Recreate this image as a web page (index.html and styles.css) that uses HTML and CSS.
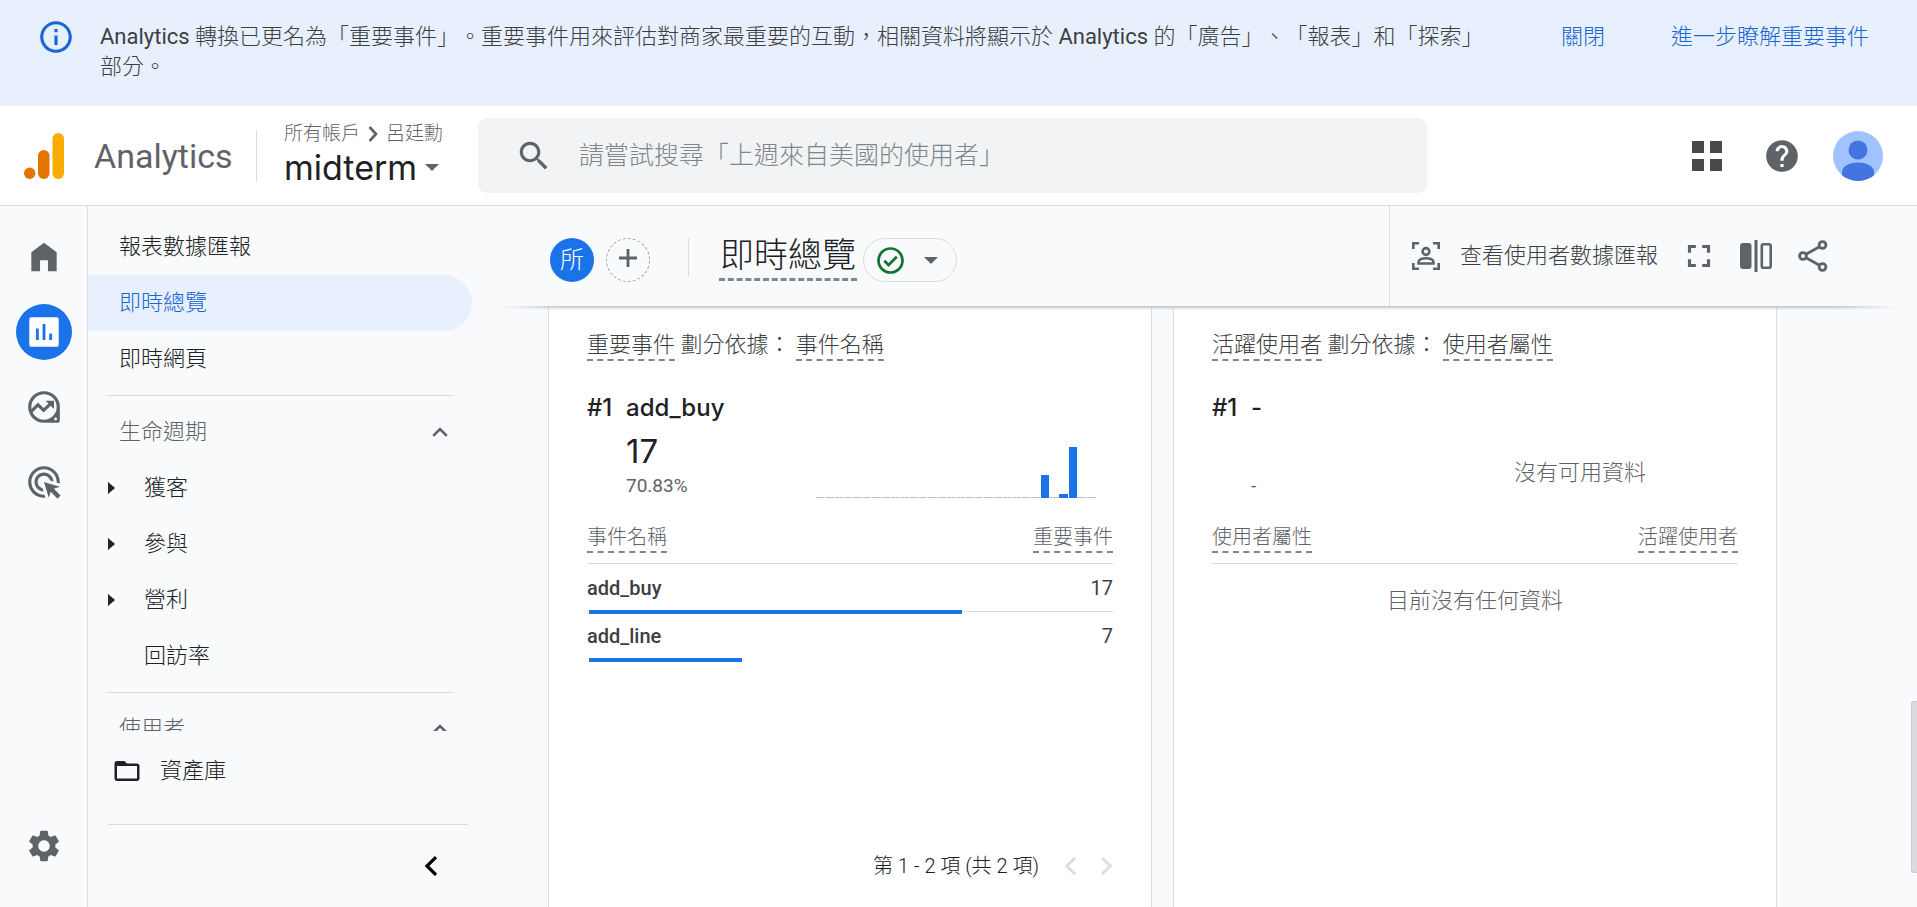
FILE: index.html
```html
<!DOCTYPE html>
<html lang="zh-Hant">
<head>
<meta charset="utf-8">
<title>Analytics | 即時總覽</title>
<link rel="stylesheet" href="styles.css">
</head>
<body>
<div class="app">
  <div class="notice">
    <svg class="icon notice-icon" viewBox="0 0 24 24"><path d="M11 7h2v2h-2zm0 4h2v6h-2zm1-9C6.48 2 2 6.48 2 12s4.48 10 10 10 10-4.48 10-10S17.52 2 12 2zm0 18c-4.41 0-8-3.59-8-8s3.59-8 8-8 8 3.59 8 8-3.59 8-8 8z"/></svg>
    <p class="notice-text"><span class="latin">Analytics</span> 轉換已更名為「重要事件」。重要事件用來評估對商家最重要的互動，相關資料將顯示於 <span class="latin">Analytics</span> 的「廣告」、「報表」和「探索」部分。</p>
    <button class="notice-action" type="button">關閉</button>
    <a class="notice-action" href="#">進一步瞭解重要事件</a>
  </div>

  <header class="topbar">
    <a class="brand" href="#">
      <svg class="brand-logo" viewBox="0 0 40 46"><rect x="28.5" y="0" width="11.5" height="46" rx="5.7" fill="#f9ab00"/><rect x="14" y="17" width="11.5" height="29" rx="5.7" fill="#e37400"/><circle cx="5.7" cy="40.3" r="5.7" fill="#e37400"/></svg>
      <span class="brand-name">Analytics</span>
    </a>
    <div class="property">
      <div class="crumbs"><span>所有帳戶</span><svg class="crumb-arrow" viewBox="0 0 10 16"><path d="M1.5 1l6.5 7-6.5 7" fill="none" stroke="#5f6368" stroke-width="2.6"/></svg><span>呂廷勳</span></div>
      <button class="property-name" type="button">midterm<svg class="caret" viewBox="0 0 14 7"><path d="M0 0h14L7 7z"/></svg></button>
    </div>
    <label class="search">
      <svg class="icon search-icon" viewBox="0 0 24 24"><path d="M15.5 14h-.79l-.28-.27C15.41 12.59 16 11.11 16 9.5 16 5.91 13.09 3 9.5 3S3 5.91 3 9.5 5.91 16 9.5 16c1.61 0 3.09-.59 4.23-1.57l.27.28v.79l5 4.99L20.49 19l-4.99-5zm-6 0C7.01 14 5 11.99 5 9.5S7.01 5 9.5 5 14 7.01 14 9.5 11.99 14 9.5 14z"/></svg>
      <input class="search-input" type="text" aria-label="搜尋" placeholder="請嘗試搜尋「上週來自美國的使用者」">
    </label>
    <div class="tools">
      <button class="tool" type="button" aria-label="應用程式"><svg class="apps-icon" viewBox="0 0 30 30"><path d="M0 0h12v12H0zM18 0h12v12H18zM0 18h12v12H0zM18 18h12v12H18z"/></svg></button>
      <button class="tool" type="button" aria-label="說明"><svg class="icon" viewBox="0 0 24 24"><path d="M12 2C6.48 2 2 6.48 2 12s4.48 10 10 10 10-4.48 10-10S17.52 2 12 2zm1 17h-2v-2h2v2zm2.07-7.75l-.9.92C13.45 12.9 13 13.5 13 15h-2v-.5c0-1.1.45-2.1 1.17-2.83l1.24-1.26c.37-.36.59-.86.59-1.41 0-1.1-.9-2-2-2s-2 .9-2 2H8c0-2.21 1.79-4 4-4s4 1.79 4 4c0 .88-.36 1.68-.93 2.25z"/></svg></button>
      <button class="tool" type="button" aria-label="帳戶"><svg class="avatar" viewBox="0 0 50 50"><defs><clipPath id="face"><circle cx="25" cy="25" r="25"/></clipPath></defs><g clip-path="url(#face)"><rect width="50" height="50" fill="#a0c3ff"/><circle cx="25" cy="19" r="9.5" fill="#4374e0"/><path d="M9 50V41c0-5 6-9.500 16-9.500S41 36 41 41v9z" fill="#4374e0"/></g></svg></button>
    </div>
  </header>

  <div class="body">
    <nav class="rail" aria-label="主選單">
      <a class="rail-item" href="#" aria-label="首頁"><svg class="icon" viewBox="0 0 24 24"><path d="M4 21V9l8-6 8 6v12h-5.500v-7h-5v7z"/></svg></a>
      <a class="rail-item" href="#" aria-label="報表"><span class="rail-disc"><svg class="icon" viewBox="0 0 24 24"><path d="M20 2.700H4c-.8 0-1.300.5-1.300 1.300v16c0 .8.5 1.300 1.300 1.300h16c.8 0 1.300-.5 1.300-1.300V4c0-.8-.5-1.300-1.300-1.300zM8.700 17H6.900V9.800h1.800V17zm4.200 0h-1.800V7h1.800v10zm4.200 0h-1.800v-4h1.800v4z"/></svg></span></a>
      <a class="rail-item" href="#" aria-label="探索"><svg class="icon" viewBox="0 0 24 24"><path fill-rule="evenodd" d="M12 2a10 10 0 0 0 0 20h8.500c.8 0 1.500-.7 1.500-1.500V12A10 10 0 0 0 12 2zm0 2a8 8 0 1 1 0 16 8 8 0 0 1 0-16zm7.300 14.700a.9.9 0 1 1 0 1.800.9.9 0 0 1 0-1.800z"/><path d="M3.500 15.200l4.700-4.600 3.600 3.500L16.500 9.500" fill="none" stroke="currentColor" stroke-width="2"/><path d="M13 8h5.300v5.300z"/></svg></a>
      <a class="rail-item" href="#" aria-label="廣告"><svg class="icon" viewBox="0 0 24 24"><path d="M11.710 17.990C8.530 17.840 6 15.220 6 12c0-3.310 2.690-6 6-6 3.220 0 5.840 2.530 5.990 5.710l-2.100-.63C15.480 9.310 13.890 8 12 8c-2.210 0-4 1.790-4 4 0 1.890 1.310 3.480 3.080 3.890l.63 2.100zM22 12c0 .3-.01.6-.04.9l-1.970-.59c.01-.1.01-.21.01-.31 0-4.420-3.580-8-8-8s-8 3.580-8 8 3.580 8 8 8c.1 0 .21 0 .31-.01l.59 1.970c-.3.03-.6.04-.9.04-5.520 0-10-4.480-10-10S6.480 2 12 2s10 4.480 10 10zm-3.770 4.260L22 15l-10-3 3 10 1.260-3.770 4.270 4.270 1.980-1.980-4.280-4.260z"/></svg></a>
      <a class="rail-item rail-last" href="#" aria-label="管理"><svg class="icon" viewBox="0 0 24 24"><path d="M19.140 12.940c.04-.3.06-.61.06-.94 0-.32-.02-.64-.07-.94l2.030-1.580c.18-.14.23-.41.12-.61l-1.920-3.320c-.12-.22-.37-.29-.59-.22l-2.390.96c-.5-.38-1.030-.7-1.620-.94l-.36-2.540c-.04-.24-.24-.41-.48-.41h-3.840c-.24 0-.43.17-.47.41l-.36 2.540c-.59.24-1.130.57-1.620.94l-2.390-.96c-.22-.08-.47 0-.59.22L2.740 8.870c-.12.21-.08.47.12.61l2.030 1.580c-.05.3-.09.63-.09.94s.02.64.07.94l-2.030 1.580c-.18.14-.23.41-.12.61l1.920 3.320c.12.22.37.29.59.22l2.390-.96c.5.38 1.030.7 1.620.94l.36 2.540c.05.24.24.41.48.41h3.840c.24 0 .44-.17.47-.41l.36-2.540c.59-.24 1.130-.56 1.620-.94l2.390.96c.22.08.47 0 .59-.22l1.920-3.320c.12-.22.07-.47-.12-.61l-2.010-1.580zM12 15.600c-1.980 0-3.600-1.620-3.600-3.600s1.620-3.600 3.600-3.600 3.600 1.620 3.600 3.600-1.620 3.600-3.600 3.600z"/></svg></a>
    </nav>

    <nav class="sidenav" aria-label="報表">
      <div class="nav-scroll">
        <a class="nav-item" href="#">報表數據匯報</a>
        <a class="nav-item nav-active" href="#">即時總覽</a>
        <a class="nav-item" href="#">即時網頁</a>
        <hr class="nav-rule">
        <button class="nav-item nav-group" type="button">生命週期<svg class="nav-chevron" viewBox="0 0 16 10"><path d="M1.200 8.800L8 2l6.800 6.800" fill="none" stroke="currentColor" stroke-width="2.600"/></svg></button>
        <a class="nav-item nav-child" href="#"><svg class="nav-tri" viewBox="0 0 7 12"><path d="M0 0l7 6-7 6z"/></svg>獲客</a>
        <a class="nav-item nav-child" href="#"><svg class="nav-tri" viewBox="0 0 7 12"><path d="M0 0l7 6-7 6z"/></svg>參與</a>
        <a class="nav-item nav-child" href="#"><svg class="nav-tri" viewBox="0 0 7 12"><path d="M0 0l7 6-7 6z"/></svg>營利</a>
        <a class="nav-item nav-child" href="#"><span class="nav-tri"></span>回訪率</a>
        <hr class="nav-rule">
        <button class="nav-item nav-group" type="button">使用者<svg class="nav-chevron" viewBox="0 0 16 10"><path d="M1.200 8.800L8 2l6.800 6.800" fill="none" stroke="currentColor" stroke-width="2.600"/></svg></button>
      </div>
      <div class="nav-foot">
        <a class="nav-item nav-library" href="#"><svg class="folder" viewBox="0 0 24 24"><path fill-rule="evenodd" d="M10 4H4c-1.100 0-2 .9-2 2v12c0 1.100.9 2 2 2h16c1.100 0 2-.9 2-2V8c0-1.100-.9-2-2-2h-8l-2-2zM4 8h16v10H4z"/></svg>資產庫</a>
        <div class="nav-collapse"><button class="collapse-button" type="button" aria-label="收合"><svg class="collapse-icon" viewBox="0 0 14 20"><path d="M12 1.200L3 10l9 8.800" fill="none" stroke="#000" stroke-width="3.200"/></svg></button></div>
      </div>
    </nav>

    <main class="main">
      <div class="report-bar">
        <div class="report-left">
          <button class="segment" type="button">所</button>
          <button class="add-segment" type="button" aria-label="新增比較項目"><svg class="plus" viewBox="0 0 18 18"><path d="M9 0v18M0 9h18" stroke="#5f6368" stroke-width="2.800"/></svg></button>
          <span class="bar-rule"></span>
          <h1 class="report-title">即時總覽</h1>
          <button class="status" type="button" aria-label="資料品質"><svg class="status-icon" viewBox="0 0 27 27"><circle cx="13.500" cy="13.500" r="12" fill="none" stroke="#137333" stroke-width="2.700"/><path d="M7.300 13.800l4.200 4.200 8.300-8.300" fill="none" stroke="#137333" stroke-width="2.700"/></svg><svg class="caret" viewBox="0 0 14 7"><path d="M0 0h14L7 7z"/></svg></button>
        </div>
        <div class="report-right">
          <button class="snapshot" type="button"><svg class="glyph" viewBox="0 0 32 32"><g fill="none" stroke="currentColor" stroke-width="2.600"><path d="M3.300 9V3.300H9M23 3.300h5.700V9M28.700 23v5.700H23M9 28.700H3.300V23"/><circle cx="16" cy="11.500" r="3.400"/><path d="M8.500 23.500v-1.300c0-2.500 3.500-4 7.500-4s7.500 1.500 7.500 4v1.300z"/></g></svg>查看使用者數據匯報</button>
          <button class="tool" type="button" aria-label="全螢幕"><svg class="icon" viewBox="0 0 24 24"><path d="M7 14H5v5h5v-2H7v-3zm-2-4h2V7h3V5H5v5zm12 7h-3v2h5v-5h-2v3zM14 5v2h3v3h2V5h-5z"/></svg></button>
          <button class="tool" type="button" aria-label="比較"><svg class="glyph" viewBox="0 0 32 32"><rect x="0" y="3" width="11.500" height="26" rx="3"/><rect x="14.500" y="0" width="3" height="32"/><rect x="21.800" y="4.300" width="8.900" height="23.400" rx="1.800" fill="none" stroke="currentColor" stroke-width="2.600"/></svg></button>
          <button class="tool tool-share" type="button" aria-label="分享"><svg class="glyph" viewBox="0 0 32 32"><g fill="none" stroke="currentColor" stroke-width="2.800"><circle cx="25.500" cy="5" r="3.400"/><circle cx="6" cy="16" r="3.400"/><circle cx="25.500" cy="27" r="3.400"/><path d="M9 14.200l13.500-7.500M9 17.800l13.500 7.500"/></g></svg></button>
        </div>
      </div>

      <div class="cards">
        <section class="card">
          <h2 class="card-title"><span class="term">重要事件</span> 劃分依據： <span class="term">事件名稱</span></h2>
          <div class="lead"><span class="rank">#1</span><span>add_buy</span></div>
          <div class="summary">
            <div class="figures"><div class="figure">17</div><div class="percent">70.83%</div></div>
            <div class="spark">
              <i></i><i></i><i></i><i></i><i></i><i></i><i></i><i></i><i></i><i></i><i></i><i></i><i></i><i></i><i></i><i></i><i></i><i></i><i></i><i></i><i></i><i></i><i></i><i></i><i class="on" style="height:45%"></i><i></i><i class="on" style="height:8%"></i><i class="on" style="height:100%"></i><i></i><i></i>
            </div>
          </div>
          <table class="events">
            <thead><tr><th><span class="term">事件名稱</span></th><th><span class="term">重要事件</span></th></tr></thead>
            <tbody>
              <tr><td>add_buy<span class="meter" style="width:70.830%"></span></td><td>17</td></tr>
              <tr><td>add_line<span class="meter" style="width:29.170%"></span></td><td>7</td></tr>
            </tbody>
          </table>
          <div class="pager">
            <span>第 1 - 2 項 (共 2 項)</span>
            <button class="page-button" type="button" disabled aria-label="上一頁"><svg class="page-icon" viewBox="0 0 12 18"><path d="M11 1L2.500 9l8.500 8" fill="none" stroke="#dadce0" stroke-width="2.800"/></svg></button>
            <button class="page-button" type="button" disabled aria-label="下一頁"><svg class="page-icon" viewBox="0 0 12 18"><path d="M1 1l8.500 8L1 17" fill="none" stroke="#dadce0" stroke-width="2.800"/></svg></button>
          </div>
        </section>

        <section class="card">
          <h2 class="card-title"><span class="term">活躍使用者</span> 劃分依據： <span class="term">使用者屬性</span></h2>
          <div class="lead"><span class="rank">#1</span><span>-</span></div>
          <div class="summary">
            <div class="figures"><div class="figure"></div><div class="percent">-</div></div>
            <div class="spark-empty">沒有可用資料</div>
          </div>
          <table class="events">
            <thead><tr><th><span class="term">使用者屬性</span></th><th><span class="term">活躍使用者</span></th></tr></thead>
            <tbody><tr><td class="no-data" colspan="2">目前沒有任何資料</td></tr></tbody>
          </table>
        </section>
      </div>
      <span class="scroll-thumb"></span>
    </main>
  </div>
</div>
</body>
</html>
```

FILE: styles.css
```css
* { box-sizing: border-box; }

body {
  margin: 0;
  font-family: Roboto, "Noto Sans CJK TC", sans-serif;
  font-size: 22px;
  font-weight: 300;
  line-height: 30px;
  text-spacing-trim: space-all;
  color: #202124;
  background: #f8fafc;
}

a { color: inherit; text-decoration: none; }

button {
  padding: 0;
  border: 0;
  background: none;
  color: inherit;
  font: inherit;
}

svg { display: block; flex: none; fill: currentColor; }

.icon { width: 38px; height: 38px; }
.glyph { width: 32px; height: 32px; }
.latin { font-weight: 400; }

.app {
  display: flex;
  flex-direction: column;
  height: 100vh;
  overflow: hidden;
}

/* Notice */
.notice {
  display: flex;
  align-items: flex-start;
  flex: none;
  padding: 22px 48px 24px 37px;
  background: #e8f0fe;
  color: #3c4043;
}
.notice-icon { margin: -4px 25px 0 0; color: #1967d2; }
.notice-text { flex: 1; margin: 0; }
.notice-action { margin-left: 66px; color: #1967d2; white-space: nowrap; }
.notice-text + .notice-action { margin-left: 68px; }

/* Top bar */
.topbar {
  display: flex;
  align-items: center;
  flex: none;
  height: 100px;
  padding: 0 34px 0 24px;
  border-bottom: 1px solid #dadce0;
  background: #fff;
}
.brand {
  display: flex;
  align-items: center;
  gap: 30px;
  width: 233px;
  height: 50px;
  border-right: 1px solid #dadce0;
}
.brand-logo { width: 40px; height: 46px; }
.brand-name { font-size: 34px; font-weight: 400; color: #5f6368; }
.property { width: 221px; padding-left: 27px; }
.crumbs {
  display: flex;
  align-items: center;
  gap: 8px;
  font-size: 19px;
  line-height: 24px;
  color: #5f6368;
}
.crumb-arrow { width: 10px; height: 16px; }
.property-name {
  display: flex;
  align-items: center;
  gap: 8px;
  font-family: Inter, Roboto, sans-serif;
  font-size: 34px;
  font-weight: 400;
  line-height: 44px;
}
.caret { width: 14px; height: 7px; color: #5f6368; }
.search {
  display: flex;
  align-items: center;
  flex: 1;
  height: 75px;
  padding-left: 37px;
  border-radius: 9px;
  background: #f1f3f4;
}
.search-icon { color: #5f6368; }
.search-input {
  flex: 1;
  min-width: 0;
  margin-left: 26px;
  padding: 0;
  border: 0;
  outline: 0;
  background: none;
  font: inherit;
  font-size: 25px;
}
.search-input::placeholder { color: #80868b; opacity: 1; }
.tools {
  display: flex;
  align-items: center;
  justify-content: flex-end;
  gap: 32px;
  width: 456px;
}
.tools .tool:first-child { margin-right: 9px; }
.tool { color: #5f6368; }
.apps-icon { width: 30px; height: 30px; color: #494949; }
.avatar { width: 50px; height: 50px; }

/* Rail */
.body { display: flex; flex: 1; min-height: 0; }
.rail {
  display: flex;
  flex-direction: column;
  flex: none;
  width: 88px;
  padding: 13px 0 24px;
  border-right: 1px solid #dadce0;
  color: #5f6368;
}
.rail-item {
  display: flex;
  align-items: center;
  justify-content: center;
  height: 75px;
}
.rail-disc {
  display: flex;
  align-items: center;
  justify-content: center;
  width: 56px;
  height: 56px;
  border-radius: 50%;
  background: #1a73e8;
  color: #fff;
}
.rail-last { margin-top: auto; }

/* Side navigation */
.sidenav {
  display: flex;
  flex-direction: column;
  flex: none;
  width: 400px;
  padding-right: 16px;
}
.nav-scroll { flex: 1; min-height: 0; padding-top: 13px; overflow: hidden; }
.nav-item {
  display: flex;
  align-items: center;
  width: 100%;
  height: 56px;
  padding-left: 31px;
  text-align: left;
}
.nav-active {
  border-radius: 0 28px 28px 0;
  background: #e8f0fe;
  color: #1967d2;
}
.nav-rule { height: 1px; margin: 8px 19px; border: 0; background: #dadce0; }
.nav-group { justify-content: space-between; padding-right: 24px; color: #5f6368; }
.nav-chevron { width: 16px; height: 10px; }
.nav-child { gap: 29px; padding-left: 20px; }
.nav-tri { width: 7px; height: 12px; }
.nav-foot { flex: none; padding-top: 12px; }
.nav-library { gap: 18px; padding-left: 24px; }
.folder { width: 30px; height: 30px; }
.nav-collapse {
  display: flex;
  justify-content: flex-end;
  margin: 25px 4px 0 20px;
  padding: 31px 30px 31px 0;
  border-top: 1px solid #dadce0;
}
.collapse-button { height: 20px; }
.collapse-icon { width: 14px; height: 20px; }

/* Report bar */
.main {
  position: relative;
  display: flex;
  flex-direction: column;
  flex: 1;
  min-width: 0;
}
.report-bar {
  position: relative;
  display: flex;
  flex: none;
  height: 100px;
}
.report-bar::after {
  content: "";
  position: absolute;
  top: 100%;
  left: 12px;
  right: 20px;
  height: 4px;
  background: linear-gradient(#bdc1c6, rgba(189, 193, 198, 0));
  mask-image: linear-gradient(90deg, transparent, #000 60px, #000 calc(100% - 60px), transparent);
}
.report-left { display: flex; flex: 1; align-items: flex-start; padding: 32px 0 0 62px; }
.segment {
  width: 44px;
  height: 44px;
  border-radius: 50%;
  background: #1a73e8;
  color: #fff;
  font-size: 24px;
}
.add-segment {
  display: flex;
  align-items: center;
  justify-content: center;
  width: 44px;
  height: 44px;
  margin-left: 12px;
  padding-bottom: 4px;
  border: 1px dashed #9aa0a6;
  border-radius: 50%;
}
.plus { width: 18px; height: 18px; }
.bar-rule { width: 1px; height: 38px; margin: 0 30px 0 38px; background: #dadce0; }
.report-title {
  margin: -4px 0 0;
  padding: 0 1px 2px;
  border-bottom: 3px dashed #80868b;
  font-size: 34px;
  font-weight: 300;
  line-height: 42px;
}
.status {
  display: flex;
  align-items: center;
  justify-content: space-between;
  width: 94px;
  height: 44px;
  margin-left: 6px;
  padding: 0 18px 0 13px;
  border: 1px solid #dadce0;
  border-radius: 22px;
}
.status-icon { width: 27px; height: 27px; }
.report-right {
  display: flex;
  align-items: center;
  gap: 22px;
  width: 528px;
  padding-left: 20px;
  border-left: 1px solid #dadce0;
}
.snapshot { display: flex; align-items: center; gap: 18px; color: #3c4043; white-space: nowrap; }
.snapshot .glyph { color: #5f6368; }
.tool-share { margin-left: 3px; }

/* Cards */
.cards {
  display: grid;
  grid-template-columns: 1fr 1fr;
  gap: 21px;
  flex: 1;
  min-height: 0;
  padding: 0 140px 0 60px;
}
.card {
  display: flex;
  flex-direction: column;
  padding: 25px 38px 0;
  border: solid #dadce0;
  border-width: 0 1px;
  background: #fff;
}
.term { display: inline-block; border-bottom: 2px dashed #80868b; line-height: 28px; }
.card-title { margin: 0; font-size: 22px; font-weight: 300; line-height: 28px; color: #3c4043; }
.lead {
  display: flex;
  gap: 12px;
  margin-top: 30px;
  font-family: Inter, Roboto, sans-serif;
  font-size: 24px;
  font-weight: 500;
  line-height: 34px;
}
.rank { width: 27px; }
.summary { display: flex; justify-content: space-between; margin-top: 6px; }
.figures { padding-left: 39px; }
.figure {
  height: 40px;
  font-family: Inter, Roboto, sans-serif;
  font-size: 33px;
  font-weight: 400;
  line-height: 40px;
}
.percent { font-size: 19px; font-weight: 400; color: #5f6368; }
.spark {
  display: flex;
  align-items: flex-end;
  gap: 1px;
  width: 280px;
  height: 51px;
  margin: 16px 17px 0 0;
}
.spark i { flex: 1; height: 1px; background: #bdc1c6; }
.spark .on { background: #1a73e8; }
.spark-empty { width: 316px; padding-top: 27px; text-align: center; color: #5f6368; }
.events { width: 100%; margin-top: 22px; border-collapse: collapse; }
.events tr { position: relative; }
.events th {
  padding: 0 0 10px;
  font-size: 20px;
  font-weight: 300;
  line-height: 28px;
  text-align: left;
  color: #5f6368;
}
.events thead { border-bottom: 1px solid #dadce0; }
.events td { height: 48px; padding: 0; font-size: 20px; font-weight: 500; color: #3c4043; }
.events tbody tr + tr { border-top: 1px solid #dadce0; }
.events th:last-child, .events td + td { text-align: right; }
.events td + td { font-weight: 400; }
.meter { position: absolute; left: 2px; bottom: -2px; height: 4px; background: #1a73e8; }
.events .no-data {
  height: 74px;
  font-size: 22px;
  font-weight: 300;
  text-align: center;
  color: #5f6368;
}
.pager {
  display: flex;
  align-items: center;
  justify-content: flex-end;
  gap: 25px;
  margin-top: auto;
  padding-bottom: 26px;
  font-size: 20px;
}
.page-icon { width: 12px; height: 18px; }

.scroll-thumb {
  position: absolute;
  right: 0;
  bottom: 34px;
  width: 6px;
  height: 172px;
  border: 1px solid #c8cacd;
  border-right: 0;
  border-radius: 3px 0 0 3px;
  background: #dadce0;
}
```
